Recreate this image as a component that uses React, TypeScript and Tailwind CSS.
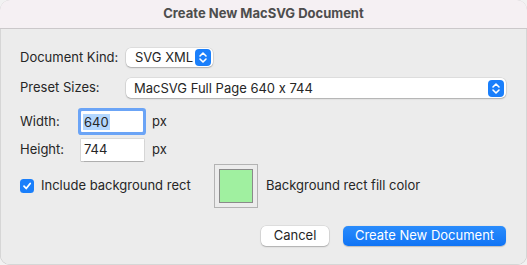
import React from "react";

function Chevrons() {
  return (
    <svg width="16" height="17" viewBox="0 0 16 17" className="block">
      <rect x="0" y="0" width="16" height="17" rx="4" fill="#1a7ffb" />
      <path d="M5 7 L8 4 L11 7" fill="none" stroke="white" strokeWidth="1.6" strokeLinecap="round" strokeLinejoin="round" />
      <path d="M5 10 L8 13 L11 10" fill="none" stroke="white" strokeWidth="1.6" strokeLinecap="round" strokeLinejoin="round" />
    </svg>
  );
}

function Popup({ text, className }: { text: string; className: string }) {
  return (
    <div
      className={`flex items-center justify-between bg-white rounded-[5px] pl-[8px] pr-[2px] shadow-[0_0_0_0.5px_rgba(0,0,0,0.12),0_1px_1.5px_rgba(0,0,0,0.22)] ${className}`}
    >
      <span className="text-[13px] text-[#262626] leading-none">{text}</span>
      <Chevrons />
    </div>
  );
}

export default function App() {
  return (
    <div className="w-[527px] h-[265px] bg-[#f2f2f2] font-['Inter','Noto_Sans','Liberation_Sans',sans-serif] [font-feature-settings:'calt'_0]">
      <div className="w-[527px] h-[265px] rounded-[10px] overflow-hidden bg-[#ececec] flex flex-col shadow-[inset_0_0_0_0.5px_rgba(0,0,0,0.18)]">
        <div className="h-[29px] shrink-0 bg-[#f5f0f3] border-b border-[#cbc8ca] flex items-center justify-center">
          <span className="text-[13px] font-bold text-[#4d4d4d] pb-[1px]">Create New MacSVG Document</span>
        </div>

        <div className="flex flex-col pl-[20px] text-[13px] text-[#262626]">
          <div className="flex items-center mt-[19px] h-[19px]">
            <span className="w-[106px]">Document Kind:</span>
            <Popup text="SVG XML" className="w-[87px] h-[19px] pl-[9px]" />
          </div>

          <div className="flex items-center mt-[11px] h-[20px]">
            <span className="w-[106px]">Preset Sizes:</span>
            <Popup text="MacSVG Full Page 640 x 744" className="w-[380px] h-[20px]" />
          </div>

          <div className="flex items-center mt-[13px] h-[21px]">
            <span className="w-[61px]">Width:</span>
            <div className="w-[62px] h-[21px] bg-white flex items-center pl-[2px] shadow-[0_0_0_3px_rgba(64,140,250,0.75)] rounded-[1px]">
              <span className="bg-[#b3d7ff] leading-[16px] px-[1px]">640</span>
            </div>
            <span className="ml-[9px]">px</span>
          </div>

          <div className="flex items-center mt-[7px] h-[22px]">
            <span className="w-[61px]">Height:</span>
            <div className="w-[63px] h-[22px] bg-white flex items-center pl-[3px] shadow-[0_0_0_0.5px_rgba(0,0,0,0.15),0_0.5px_1px_rgba(0,0,0,0.2)]">
              <span>744</span>
            </div>
            <span className="ml-[8px]">px</span>
          </div>

          <div className="flex items-center mt-[3px] h-[44px]">
            <div className="w-[14px] h-[14px] rounded-[3.5px] bg-[#1a7ffb] flex items-center justify-center">
              <svg width="10" height="10" viewBox="0 0 10 10">
                <path d="M2 5.2 L4.2 7.5 L8.2 2.5" fill="none" stroke="white" strokeWidth="1.8" strokeLinecap="round" strokeLinejoin="round" />
              </svg>
            </div>
            <span className="ml-[7px] w-[173px]">Include background rect</span>
            <div className="w-[44px] h-[44px] border border-[#b3b3b3] flex items-center justify-center">
              <div className="w-[34px] h-[34px] bg-[#a0f0a0] border border-[#8a8a8a]" />
            </div>
            <span className="ml-[8px]">Background rect fill color</span>
          </div>

          <div className="flex justify-end items-center mt-[18px] pr-[21px] gap-[14px]">
            <div className="w-[68px] h-[20px] bg-white rounded-[5px] flex items-center justify-center shadow-[0_0_0_0.5px_rgba(0,0,0,0.12),0_1px_1.5px_rgba(0,0,0,0.22)]">
              Cancel
            </div>
            <div className="w-[163px] h-[20px] rounded-[5px] flex items-center justify-center text-white bg-gradient-to-b from-[#2a8cfc] to-[#0f74f5] shadow-[0_0.5px_1px_rgba(0,0,0,0.2)]">
              Create New Document
            </div>
          </div>
        </div>
      </div>
    </div>
  );
}
